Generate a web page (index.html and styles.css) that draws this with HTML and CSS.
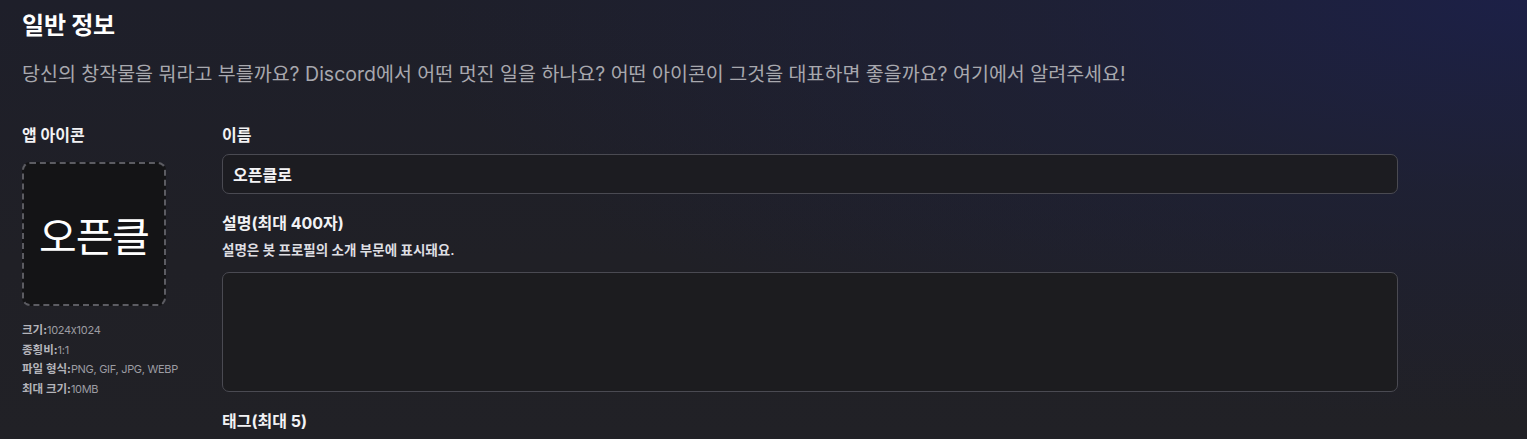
FILE: index.html
```html
<!DOCTYPE html>
<html lang="ko">
<head>
<meta charset="utf-8">
<title>일반 정보</title>
<link rel="stylesheet" href="styles.css">
</head>
<body>
<main class="page">
  <h1 class="title">일반 정보</h1>
  <p class="subtitle">당신의 창작물을 뭐라고 부를까요? Discord에서 어떤 멋진 일을 하나요? 어떤 아이콘이 그것을 대표하면 좋을까요? 여기에서 알려주세요!</p>
  <div class="layout">
    <section class="icon-col">
      <div class="label">앱 아이콘</div>
      <div class="icon-box"><span class="icon-text">오픈클</span></div>
      <ul class="specs">
        <li><b>크기:</b><span>1024x1024</span></li>
        <li><b>종횡비:</b><span>1:1</span></li>
        <li><b>파일 형식:</b><span>PNG, GIF, JPG, WEBP</span></li>
        <li><b>최대 크기:</b><span>10MB</span></li>
      </ul>
    </section>
    <section class="form-col">
      <div class="field">
        <div class="label">이름</div>
        <div class="input">오픈클로</div>
      </div>
      <div class="field">
        <div class="label">설명(최대 400자)</div>
        <div class="hint">설명은 봇 프로필의 소개 부문에 표시돼요.</div>
        <div class="textarea"></div>
      </div>
      <div class="field">
        <div class="label">태그(최대 5)</div>
      </div>
    </section>
  </div>
</main>
</body>
</html>
```
FILE: styles.css
```css
html, body {
  margin: 0;
  height: 100%;
}
body {
  background-color: #202026;
  background-image:
    radial-gradient(ellipse 1100px 420px at 100% 0%, rgba(28, 32, 72, 0.95) 0%, rgba(30, 33, 60, 0.6) 45%, rgba(32, 32, 38, 0) 100%),
    linear-gradient(180deg, #1e1f2a 0%, #202026 60%, #212126 100%);
  font-family: Inter, "Noto Sans CJK KR", sans-serif;
  color: #ffffff;
  overflow: hidden;
}
.page {
  padding: 10px 22px 0 22px;
}
.title {
  margin: 0;
  font-size: 24px;
  font-weight: 700;
  line-height: 32px;
  letter-spacing: -0.2px;
}
.subtitle {
  margin: 18px 0 0 0;
  font-size: 19.5px;
  line-height: 28px;
  color: #a8a8ae;
  letter-spacing: 0;
}
.layout {
  display: flex;
  gap: 56px;
  margin-top: 36px;
}
.icon-col {
  width: 144px;
  flex: none;
}
.form-col {
  width: 1176px;
  display: flex;
  flex-direction: column;
  gap: 18px;
}
.label {
  font-size: 16px;
  font-weight: 700;
  line-height: 22px;
  color: #f2f2f4;
}
.icon-box {
  margin-top: 16px;
  box-sizing: border-box;
  width: 144px;
  height: 144px;
  border: 2px dashed #5c5c62;
  border-radius: 8px;
  background: #141416;
  display: flex;
  align-items: center;
  justify-content: center;
}
.icon-text {
  font-family: "Noto Sans CJK KR", sans-serif;
  font-size: 41px;
  font-weight: 400;
  color: #ffffff;
  letter-spacing: -1px;
}
.specs {
  list-style: none;
  margin: 15px 0 0 0;
  padding: 0;
}
.specs li {
  font-size: 11.5px;
  line-height: 19.5px;
  color: #9c9ca2;
  white-space: nowrap;
}
.specs b {
  font-weight: 700;
  color: #b4b4ba;
}
.specs span {
  font-size: 11px;
  letter-spacing: -0.3px;
}
.field .input {
  margin-top: 8px;
  box-sizing: border-box;
  height: 40px;
  border: 1px solid #4a4a52;
  border-radius: 7px;
  background: #1c1c21;
  padding: 0 10px;
  display: flex;
  align-items: center;
  font-size: 16px;
  font-weight: 700;
  color: #f4f4f6;
}
.hint {
  margin-top: 7px;
  font-size: 13.5px;
  font-weight: 600;
  line-height: 18px;
  color: #dedee2;
}
.textarea {
  margin-top: 13px;
  box-sizing: border-box;
  height: 120px;
  border: 1px solid #4a4a52;
  border-radius: 7px;
  background: #1c1c1f;
}
```
